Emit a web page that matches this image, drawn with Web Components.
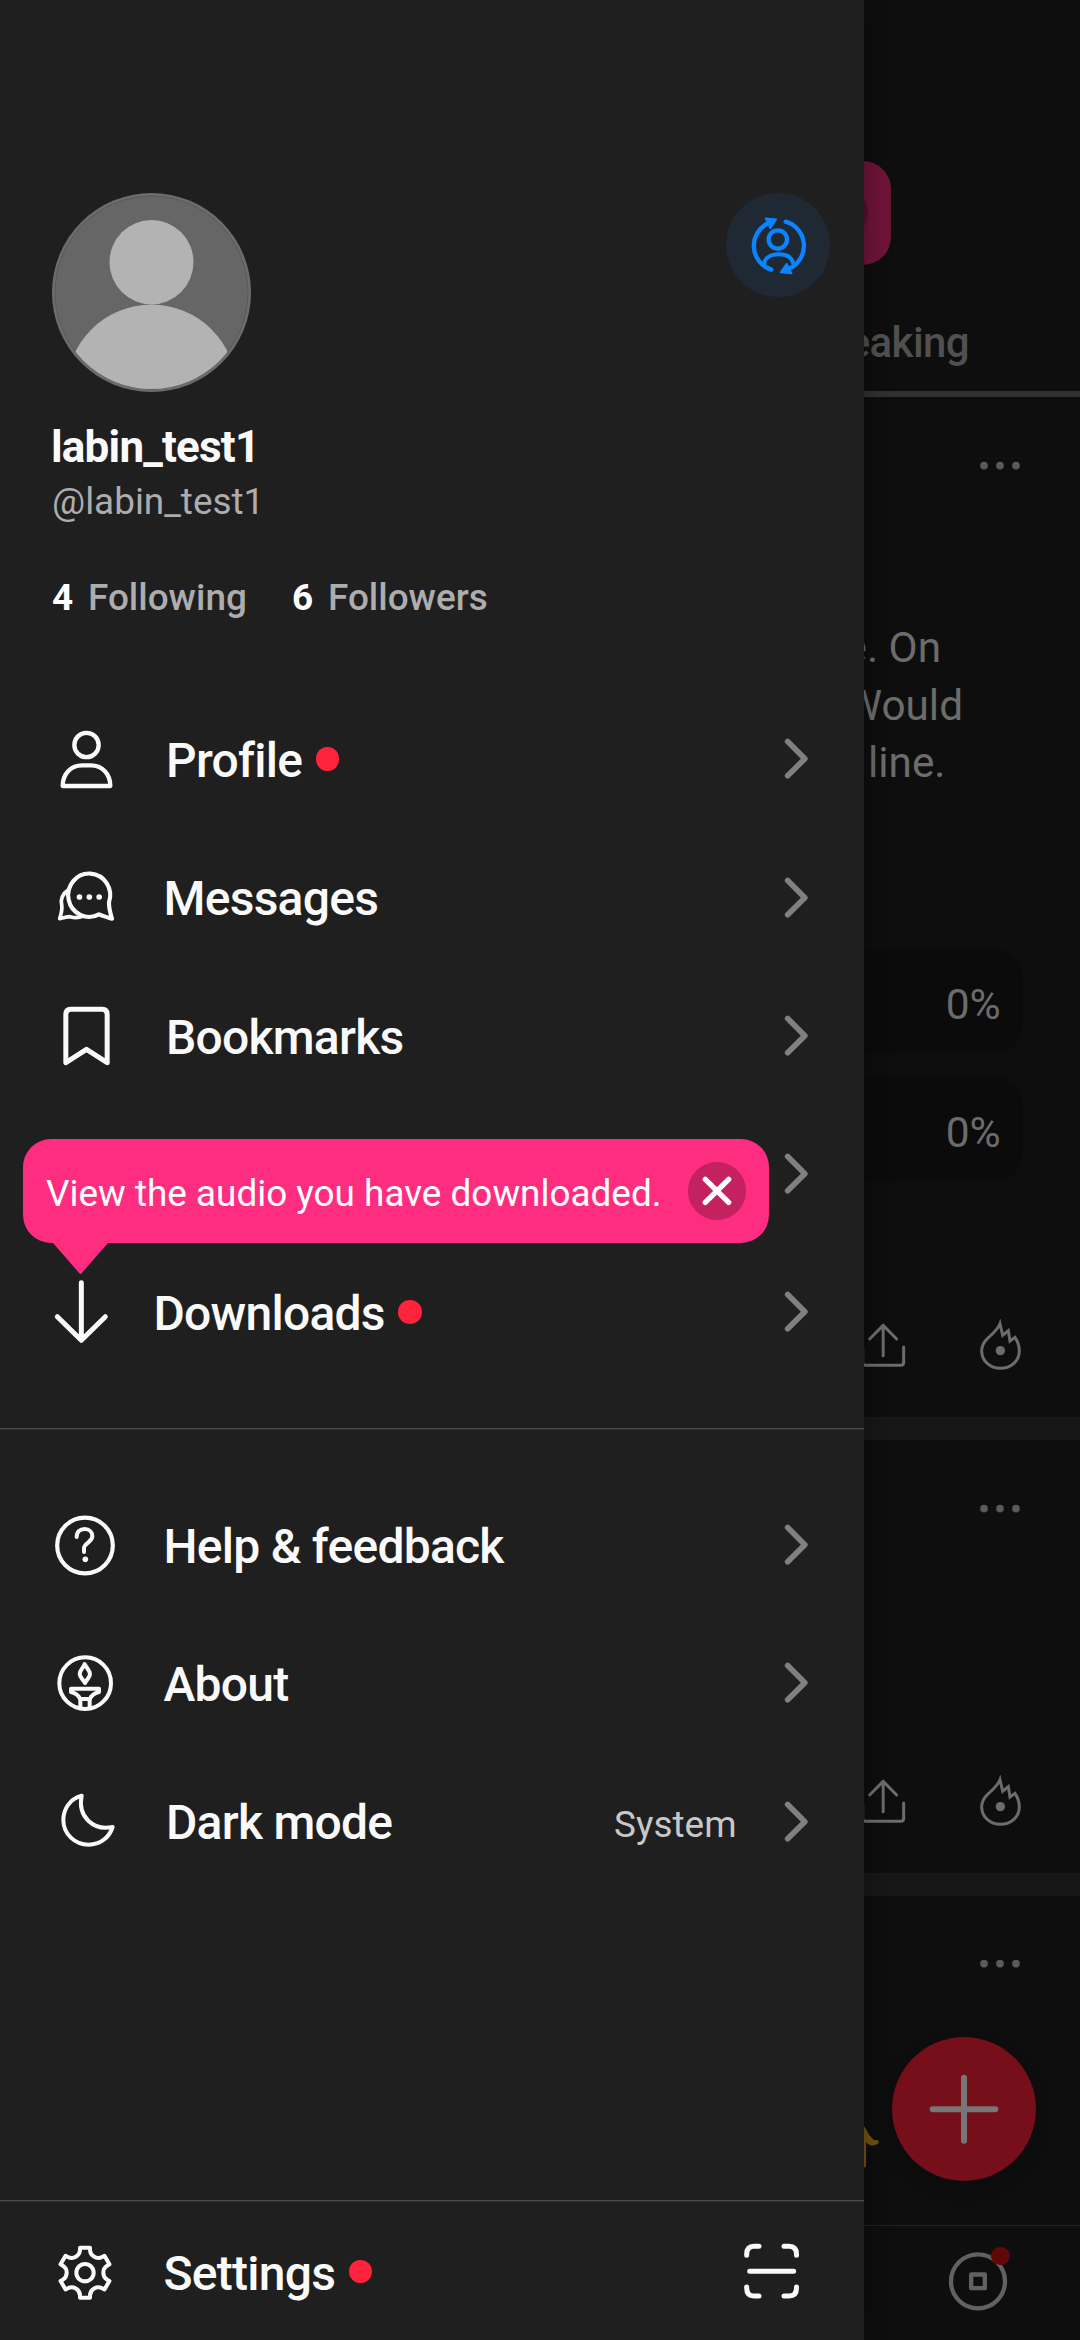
<!DOCTYPE html>
<html lang="en">
<head>
<meta charset="utf-8">
<title>Account drawer</title>
<style>
html, body { margin: 0; background: #0e0e0e; }
body { font-family: Roboto, "Liberation Sans", sans-serif; width: 1080px; height: 2340px; overflow: hidden; }
</style>
</head>
<body>
<app-screen></app-screen>
<script>
const define = (name, html) => customElements.define(name, class extends HTMLElement {
  connectedCallback() {
    const root = this.attachShadow({ mode: 'open' });
    const t = document.createElement('template');
    t.innerHTML = typeof html === 'function' ? html(this) : html;
    root.appendChild(t.content.cloneNode(true));
  }
});

/* name: [viewBox, shapes]; three units to a pixel */
const ICONS = {
  profile: ['144 99 216 216', '<g stroke-width="13"><circle cx="259.500" cy="165" r="36.500"/><path d="M188 288C188 250 214 226 246 226H273C305 226 331 250 331 288Z"/></g>'],
  messages: ['144 514 216 216', '<path stroke-width="12.500" d="M297 674A63 65 0 1 1 327 638C326 655 331 670 336 687C322 683 310 680 297 674Z"/><path stroke-width="11" d="M203 602C188 611 181 630 185 645C188 659 184 672 179 687C190 685 200 681 210 681C224 685 238 684 248 680"/><g fill="currentColor" stroke="none"><circle cx="238.500" cy="622" r="8.500"/><circle cx="268" cy="622" r="8.500"/><circle cx="297.500" cy="622" r="8.500"/></g>'],
  bookmark: ['144 928 216 216', '<path stroke-width="15" d="M197.500 1116V971Q197.500 956 212 956H307Q321.500 956 321.500 971V1116L259.500 1076Z"/>'],
  download: ['144 468 216 216', '<path stroke-width="15" d="M244 488V660M172 590L244 661L316 590"/>'],
  help: ['144 87 216 216', '<circle cx="255" cy="196.500" r="83.500" stroke-width="12.500"/><path stroke-width="12" d="M230 171C230 155 240 147 254 147C268 147 277 157 277 169C277 187 252 188 252 205V216"/><circle cx="256" cy="238" r="8.500" fill="currentColor" stroke="none"/>'],
  about: ['144 502 216 216', '<g stroke-width="12"><circle cx="255.500" cy="610.500" r="77.500"/><path d="M254 553C260 566 270 573 270 583C270 592 261 598 255 610C248 598 239 592 239 583C239 573 249 566 254 553Z"/><path d="M213 627H297V637C282 641 272 648 269 660V682M213 627V637C228 641 238 648 241 660V682M241 658H269"/></g>'],
  moon: ['144 917 216 216', '<path stroke-width="12" d="M245 949C210 959 190 988 190 1022C190 1064 225 1096 266 1096C300 1096 327 1076 338 1043C280 1055 232 1012 245 949Z"/>'],
  gear: ['144 164 216 216', '<g stroke-width="12" transform="translate(255 274)"><circle r="26"/><path d="M-15 -68V-75H15V-68A25 25 0 0 0 51.400 -47L58.300 -50.500L73.300 -25L66.400 -21A25 25 0 0 0 66.400 21L73.300 25L58.300 50.500L51.400 47A25 25 0 0 0 15 68V75H-15V68A25 25 0 0 0 -51.400 47L-58.300 50.500L-73.300 25L-66.400 21A25 25 0 0 0 -66.400 -21L-73.300 -25L-58.300 -50.500L-51.400 -47A25 25 0 0 0 -15 -68Z"/></g>'],
  scan: ['129 727 171 171', '<path stroke-width="15" d="M140 764V761Q140 737 162 737H177M252 737H267Q289.500 737 289.500 761V764M140 859V862Q140 886 162 886H177M252 886H267Q289.500 886 289.500 862V859M149 811.500H281"/>'],
  chevron: ['673 130 75 130', '<path stroke-width="17" d="M684 143.500L735.500 195L684 246.500"/>'],
  dots: ['837 905 126 28', '<g fill="currentColor" stroke="none"><circle cx="852" cy="919" r="11.500"/><circle cx="900" cy="919" r="11.500"/><circle cx="948" cy="919" r="11.500"/></g>'],
  share: ['240 117 138 153', '<path stroke-width="9" d="M269 177L309.500 136L350 177M309.500 136V227M248 201V247Q248 256 257 256H362Q371 256 371 247V201"/>'],
  flame: ['597 117 129 153', '<path stroke-width="9" stroke-linejoin="miter" stroke-miterlimit="8" d="M660 131C654 147 640 159 625 173C611 186 605 198 605 213C605 243 631 265 661 265C693 265 718 243 718 212C718 197 713 184 705 172L690 183L685 152L668 166Z"/><circle cx="661" cy="212" r="14" fill="currentColor" stroke="none"/>'],
  account: ['144 164 177 183', '<g stroke-width="13"><path d="M211 328A75 75 0 0 1 203 188M254 184A75 75 0 0 1 266 324"/><circle cx="230.500" cy="237.500" r="27.500"/><path stroke-width="12" d="M190 311C191 291 210 282 233 282C256 282 272 291 276 307"/></g><path fill="currentColor" stroke-width="5" d="M194 174L226 177L208 204ZM257 310L272 339L239 336Z"/>'],
  close: ['744 187 172 172', '<path stroke-width="16" d="M796 239L866 308M866 239L796 308"/>'],
  plus: ['576 110 432 432', '<path stroke-width="18" d="M698 326.500H886M792 232V421"/>'],
  disc: ['744 752 180 180', '<circle cx="834" cy="843" r="81" stroke-width="13"/><rect x="813.500" y="822.500" width="41" height="41" stroke-width="13"/>'],
};
define('line-icon', el => {
  const [vb, body] = ICONS[el.getAttribute('name')];
  const [, , w, h] = vb.split(' ').map(Number);
  return `<style>:host{display:block;flex:none;width:${w / 3}px;height:${h / 3}px}svg{display:block;width:100%;height:100%}</style>
  <svg viewBox="${vb}" fill="none" stroke="currentColor" stroke-linecap="round" stroke-linejoin="round">${body}</svg>`;
});

define('user-avatar', `<style>:host{display:block;width:199px;height:199px}svg{display:block}</style>
<svg width="199" height="199" viewBox="0 0 199 199"><defs><clipPath id="c"><circle cx="99.500" cy="99.500" r="96.500"/></clipPath></defs>
<circle cx="99.500" cy="99.500" r="99.500" fill="#6c6c6c"/><circle cx="99.500" cy="99.500" r="96.500" fill="#666" stroke="#565656" stroke-width=".8"/>
<g clip-path="url(#c)" fill="#b3b3b3"><ellipse cx="99.500" cy="69.200" rx="42" ry="42.200"/><circle cx="99.500" cy="196.500" r="85"/></g></svg>`);

define('user-header', `<style>
:host{display:block;padding:193px 34px 0 52px;height:690px;box-sizing:border-box}
.top{display:flex;justify-content:space-between;height:199px}
.switch{width:104px;height:104px;border-radius:50%;background:#1f2934;color:#0a84ff;display:flex;align-items:center;justify-content:center}
.name{font-weight:700;font-size:44px;letter-spacing:-.8px;line-height:54px;color:#fafafa;margin-top:28px;margin-left:-1px}
.handle{font-size:36.900px;line-height:44px;color:#adadad;margin-top:6px}
.stats{display:flex;margin-top:52px;line-height:44px;font-size:36.900px;font-weight:500;color:#adadad}
b{color:#fff;font-weight:700;width:36px}span{width:204px}
</style>
<div class="top"><user-avatar></user-avatar><div class="switch"><line-icon name="account"></line-icon></div></div>
<div class="name">labin_test1</div><div class="handle">@labin_test1</div>
<div class="stats"><b>4</b><span>Following</span><b>6</b><span>Followers</span></div>`);

define('menu-row', el => `<style>
:host{display:flex;align-items:center;height:138.250px;padding:0 55px 0 48px;box-sizing:border-box;color:#fafafa}
.label{font-weight:500;font-size:48px;letter-spacing:-.75px;line-height:56px;padding-top:4px;white-space:nowrap;margin-left:${el.getAttribute('inset') || 43.5}px}
.badge{width:23.400px;height:23.400px;border-radius:50%;background:#ff233b;margin-left:13.500px}
.end{margin-left:auto;display:flex;align-items:center}
.value{margin-right:47.500px;color:#c8c8c8;font-size:36.900px;padding-top:6px}
.chevron{color:#808080}
</style>
${el.getAttribute('icon') ? `<line-icon name="${el.getAttribute('icon')}"></line-icon>` : ''}
<div class="label"><slot></slot></div>
${el.hasAttribute('badge') ? '<div class="badge"></div>' : ''}
<div class="end">${el.getAttribute('value') ? `<div class="value">${el.getAttribute('value')}</div>` : ''}<slot name="end"><line-icon class="chevron" name="chevron"></line-icon></slot></div>`);

define('hint-bubble', `<style>
:host{display:flex;align-items:center;position:absolute;left:23px;top:1139.200px;width:746px;height:104px;box-sizing:border-box;border-radius:28px;background:#ff2d80;color:#fff;padding:0 23.500px 0 23px}
.text{font-size:36.900px;line-height:44px;padding-top:6px;white-space:nowrap;flex:1}
.x{background:#c32160;border-radius:50%;width:57.400px;height:57.400px}
.tail{position:absolute;left:29.500px;top:103.500px}
</style>
<div class="text"><slot></slot></div><div class="x"><line-icon name="close"></line-icon></div>
<svg class="tail" width="55" height="31.500" viewBox="0 0 55 31.500"><path fill="#ff2d80" d="M0 0H55L27.500 31.500Z"/></svg>`);

define('side-drawer', `<style>
:host{display:flex;flex-direction:column;position:absolute;left:0;top:0;width:864px;height:2340px;background:#1f1f1f;box-shadow:0 0 24px rgba(0,0,0,.35)}
hr{border:0;margin:0;height:1px;background:#4c4c4c;border-bottom:1px solid #2e2e2e}
.first{margin-top:46.500px;margin-bottom:46px}
.foot{margin-top:auto;height:139.700px}
.foot menu-row{height:138.500px}
.scan{margin-right:8.700px;color:#fafafa}
</style>
<user-header></user-header>
<menu-row icon="profile" inset="46" badge>Profile</menu-row>
<menu-row icon="messages">Messages</menu-row>
<menu-row icon="bookmark" inset="46">Bookmarks</menu-row>
<menu-row></menu-row>
<menu-row icon="download" inset="33.5" badge>Downloads</menu-row>
<hr class="first">
<menu-row icon="help">Help &amp; feedback</menu-row>
<menu-row icon="about">About</menu-row>
<menu-row icon="moon" inset="46" value="System">Dark mode</menu-row>
<div class="foot"><hr><menu-row icon="gear" badge>Settings<line-icon class="scan" slot="end" name="scan"></line-icon></menu-row></div>
<hint-bubble>View the audio you have downloaded.</hint-bubble>`);

define('feed-post', el => `<style>
:host{display:flex;flex-direction:column;background:#0e0e0e;box-sizing:border-box;color:#6c6c6c}
.more{align-self:flex-end;margin:${el.hasAttribute('cut') ? 63 : 64}px 59px 0 0;color:#5a5a5a}
.actions{margin-top:auto;display:flex;justify-content:flex-end;gap:73px;padding:0 58px 47px 0}
</style><line-icon class="more" name="dots"></line-icon><slot></slot>
${el.hasAttribute('cut') ? '' : '<div class="actions"><line-icon name="share"></line-icon><line-icon name="flame"></line-icon></div>'}`);

define('poll-option', `<style>
:host{display:flex;align-items:center;justify-content:flex-end;height:104.500px;box-sizing:border-box;margin:0 57.300px 23px;padding:8px 22px 0;border-radius:28px;background:#0b0b0b;font-size:42.500px;line-height:50px}
</style><slot></slot>`);

define('feed-page', `<style>
:host{display:flex;flex-direction:column;height:2340px;background:#171717}
header{height:397px;box-sizing:border-box;background:#0e0e0e;border-bottom:6px solid #303030;padding-top:160.500px;display:flex;flex-direction:column;align-items:flex-end}
.live{width:104px;height:104px;border-radius:28px;background:#6e1438;margin-right:189px;display:flex;align-items:center;justify-content:center}
.live i{width:57px;height:57px;border-radius:50%;background:#541030}
.tab{margin:53px 111px 0 0;font-weight:500;font-size:42px;letter-spacing:-.6px;line-height:50px;color:#505050}
.one{height:1020px}.two{height:433px;margin:23px 0}.three{flex:1}
p{margin:0;text-align:right;font-size:42.300px;line-height:57.400px;white-space:pre}
.text{margin:149px 0 157.400px}
nav{height:115px;box-sizing:border-box;background:#0e0e0e;border-top:1px solid #222;padding:25px 72px 0 0;display:flex;justify-content:flex-end;color:#616161}
.ring{position:relative;height:60px}
.ring::after{content:"";position:absolute;width:18.600px;height:18.600px;border-radius:50%;background:#610808;right:-1.500px;top:-4.500px}
.fab{position:absolute;left:892px;top:2036.700px;width:144px;height:144px;border-radius:50%;background:#760f1a;color:#767676;box-shadow:0 8px 20px rgba(0,0,0,.15)}
.emoji{position:absolute;left:852px;top:2124px}
</style>
<header><div class="live"><i></i></div><div class="tab">Speaking</div></header>
<feed-post class="one"><div class="text"><p style="padding-right:139px">e. On</p><p style="padding-right:117px">Would</p><p style="padding-right:134.500px">line.</p></div>
<poll-option>0%</poll-option><poll-option>0%</poll-option></feed-post>
<feed-post class="two"></feed-post>
<feed-post class="three" cut></feed-post>
<nav><div class="ring"><line-icon name="disc"></line-icon></div></nav>
<svg class="emoji" width="28" height="46" viewBox="0 0 28 46"><path fill="#70530f" d="M6 0H10C14 3 16 11 21 15Q23 17 25 16Q28 17 26 19.500Q22 22.500 18 21Q15 20 14 18V42Q13 44 11 44H6Z"/></svg>
<div class="fab"><line-icon name="plus"></line-icon></div>`);

define('app-screen', `<style>:host{display:block;position:relative;width:1080px;height:2340px;overflow:hidden}</style>
<feed-page></feed-page><side-drawer></side-drawer>`);
</script>
</body>
</html>
